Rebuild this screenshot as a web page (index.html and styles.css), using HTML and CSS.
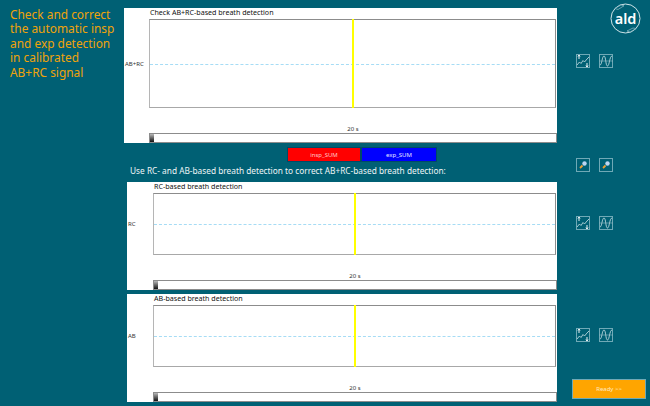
FILE: index.html
```
<!DOCTYPE html>
<html lang="en">
<head>
<meta charset="utf-8">
<title>Breath detection</title>
<link rel="stylesheet" href="styles.css">
</head>
<body>
<div class="page">
  <aside class="intro">Check and correct<br>the automatic insp<br>and exp detection<br>in calibrated<br>AB+RC signal</aside>
  <main class="middle">
    <section class="panel panel-main">
      <div class="chart-title">Check AB+RC-based breath detection</div>
      <div class="chart-row">
        <div class="chart-label">AB+RC</div>
        <div class="plot"><i class="baseline"></i><i class="cursor"></i></div>
      </div>
      <div class="time">20 s</div>
      <div class="slider"><i class="thumb"></i></div>
    </section>
    <div class="legend"><div class="key key-insp">insp_SUM</div><div class="key key-exp">exp_SUM</div></div>
    <p class="hint">Use RC- and AB-based breath detection to correct AB+RC-based breath detection:</p>
    <section class="panel panel-sub">
      <div class="chart-title">RC-based breath detection</div>
      <div class="chart-row">
        <div class="chart-label">RC</div>
        <div class="plot"><i class="baseline"></i><i class="cursor"></i></div>
      </div>
      <div class="time">20 s</div>
      <div class="slider"><i class="thumb"></i></div>
    </section>
    <section class="panel panel-sub panel-last">
      <div class="chart-title">AB-based breath detection</div>
      <div class="chart-row">
        <div class="chart-label">AB</div>
        <div class="plot"><i class="baseline"></i><i class="cursor"></i></div>
      </div>
      <div class="time">20 s</div>
      <div class="slider"><i class="thumb"></i></div>
    </section>
  </main>
  <aside class="side">
    <div class="logo-row">
      <svg class="logo" width="31" height="31" viewBox="0 0 31 31">
        <circle cx="15.5" cy="15.5" r="14.5" fill="none" stroke="#cfe4e8" stroke-width="1"/>
        <path d="M5 5.500 L11 2 L14 2.800 L8 6.500 Z M17 28 L23 25 L26 25.500 L20 29 Z" fill="#006074" stroke="#a9cdd5" stroke-width=".6"/>
        <text x="15.5" y="20.5" text-anchor="middle" class="logo-text">ald</text>
      </svg>
    </div>
    <div class="tools tools-1">
      <button class="tool"><svg width="14" height="14" viewBox="0 0 14 14"><path d="M1 11 L3.500 8 L5 9.500 L7 6.500 L8.500 8 L11 5 L13 3" fill="none" stroke="#cfe4e8" stroke-width=".8"/><path d="M3 1 V5 M2 2.500 L3 1 L4 2.500 M11 9 V13 M10 11.500 L11 13 L12 11.500" fill="none" stroke="#fff" stroke-width=".9"/></svg></button>
      <button class="tool"><svg width="14" height="14" viewBox="0 0 14 14"><path d="M1 11 C3 11 3 2 5 2 C7 2 6.500 12 8.500 12 C10.500 12 10.500 2 13 2" fill="none" stroke="#cfe4e8" stroke-width=".8"/><path d="M0 7 H14" stroke="#8fb9c2" stroke-width=".6"/></svg></button>
    </div>
    <div class="tools tools-2">
      <button class="tool"><svg width="14" height="14" viewBox="0 0 14 14"><path d="M4 10 L6.500 7.500" stroke="#f0a030" stroke-width="1.800"/><circle cx="8.500" cy="5.500" r="2.200" fill="#bcd6f2"/></svg></button>
      <button class="tool"><svg width="14" height="14" viewBox="0 0 14 14"><path d="M4 10 L6.500 7.500" stroke="#f0a030" stroke-width="1.800"/><circle cx="8.500" cy="5.500" r="2.200" fill="#bcd6f2"/></svg></button>
    </div>
    <div class="tools tools-3">
      <button class="tool"><svg width="14" height="14" viewBox="0 0 14 14"><path d="M1 11 L3.500 8 L5 9.500 L7 6.500 L8.500 8 L11 5 L13 3" fill="none" stroke="#cfe4e8" stroke-width=".8"/><path d="M3 1 V5 M2 2.500 L3 1 L4 2.500 M11 9 V13 M10 11.500 L11 13 L12 11.500" fill="none" stroke="#fff" stroke-width=".9"/></svg></button>
      <button class="tool"><svg width="14" height="14" viewBox="0 0 14 14"><path d="M1 11 C3 11 3 2 5 2 C7 2 6.500 12 8.500 12 C10.500 12 10.500 2 13 2" fill="none" stroke="#cfe4e8" stroke-width=".8"/><path d="M0 7 H14" stroke="#8fb9c2" stroke-width=".6"/></svg></button>
    </div>
    <div class="tools tools-4">
      <button class="tool"><svg width="14" height="14" viewBox="0 0 14 14"><path d="M1 11 L3.500 8 L5 9.500 L7 6.500 L8.500 8 L11 5 L13 3" fill="none" stroke="#cfe4e8" stroke-width=".8"/><path d="M3 1 V5 M2 2.500 L3 1 L4 2.500 M11 9 V13 M10 11.500 L11 13 L12 11.500" fill="none" stroke="#fff" stroke-width=".9"/></svg></button>
      <button class="tool"><svg width="14" height="14" viewBox="0 0 14 14"><path d="M1 11 C3 11 3 2 5 2 C7 2 6.500 12 8.500 12 C10.500 12 10.500 2 13 2" fill="none" stroke="#cfe4e8" stroke-width=".8"/><path d="M0 7 H14" stroke="#8fb9c2" stroke-width=".6"/></svg></button>
    </div>
    <button class="ready">Ready &gt;&gt;</button>
  </aside>
</div>
</body>
</html>
```
FILE: styles.css
```
* { box-sizing: border-box; }
html, body { margin: 0; padding: 0; }
body {
  width: 650px;
  height: 406px;
  overflow: hidden;
  background: #006074;
  font-family: "Noto Sans", sans-serif;
}
.page { display: flex; width: 650px; height: 406px; }
.intro {
  width: 124px;
  flex: none;
  padding: 7px 0 0 10px;
  color: #f0a30a;
  font-size: 11.9px;
  line-height: 14.4px;
  white-space: nowrap;
}
.middle { width: 433px; flex: none; padding-top: 8px; }
.panel { background: #fff; position: relative; }
.panel-main { height: 135px; }
.panel-sub { height: 108px; margin-left: 3px; }
.panel-last { margin-top: 4px; }
.chart-title {
  height: 11px;
  font-size: 7.1px;
  line-height: 9px;
  color: #111;
  white-space: nowrap;
}
.panel-main .chart-title { padding-left: 26px; }
.panel-sub .chart-title { padding-left: 27px; }
.chart-row { display: flex; align-items: center; }
.chart-label { font-size: 6px; color: #333; padding-left: 1px; white-space: nowrap; }
.panel-main .chart-label { width: 25px; }
.panel-sub .chart-label { width: 26px; }
.plot {
  flex: none;
  position: relative;
  background: #fff;
  border: 1px solid #8c8c8c;
  border-left-color: #b5b5b5;
  border-bottom-color: #a8a8a8;
}
.panel-main .plot { width: 407px; height: 89px; }
.panel-sub .plot { width: 403px; height: 62px; }
.baseline {
  position: absolute;
  left: 0;
  right: 0;
  top: 50%;
  border-top: 1px dashed #a6dcf5;
}
.cursor {
  position: absolute;
  top: -1px;
  bottom: -1px;
  left: calc(50% - 0.5px);
  width: 2px;
  background: #ffff00;
}
.time {
  text-align: center;
  font-size: 6px;
  color: #333;
  line-height: 8px;
}
.panel-main .time { margin-top: 17px; padding-left: 25px; }
.panel-sub .time { margin-top: 17px; padding-left: 26px; }
.slider {
  position: relative;
  height: 10px;
  background: #fff;
  border: 1px solid #8c8c8c;
}
.panel-main .slider { margin-left: 25px; width: 408px; }
.panel-sub .slider { margin-left: 26px; width: 404px; }
.thumb {
  position: absolute;
  left: 0;
  top: 0;
  bottom: 0;
  width: 4px;
  background: linear-gradient(#b9b9b9, #111);
}
.legend {
  display: flex;
  margin: 4px 0 0 163px;
  height: 15px;
}
.key {
  height: 15px;
  font-size: 6px;
  line-height: 14px;
  text-align: center;
  color: #e8e8ff;
  border: 1px solid #004a66;
}
.key-insp { background: #ff0000; color: #ffc8c8; width: 74px; }
.key-exp { background: #0000ff; width: 76px; }
.hint {
  margin: 0;
  height: 20px;
  padding: 3px 0 0 6px;
  font-size: 8.3px;
  line-height: 12px;
  color: #eef5f6;
  white-space: nowrap;
}
.side { flex: 1; display: flex; flex-direction: column; padding-left: 19px; }
.logo-row { height: 54px; padding: 3px 0 0 34px; }
.logo { display: block; }
.logo-text { font: 600 14.5px "Noto Sans", sans-serif; fill: #fff; }
.tools { display: flex; gap: 9px; }
.tools-2 { margin-top: 90px; }
.tools-3 { margin-top: 44px; }
.tools-4 { margin-top: 98px; }
.tool {
  width: 14px;
  height: 14px;
  padding: 0;
  display: block;
  background: transparent;
  border: 1px solid #6fa9b6;
}
.tool svg { display: block; margin: -1px; }
.ready {
  margin: 37px 0 0 -4px;
  width: 74px;
  height: 20px;
  padding: 0;
  background: #ffa500;
  border: 1px solid #6fa9b6;
  color: #ffe9c0;
  font: 6px "Noto Sans", sans-serif;
}
```
